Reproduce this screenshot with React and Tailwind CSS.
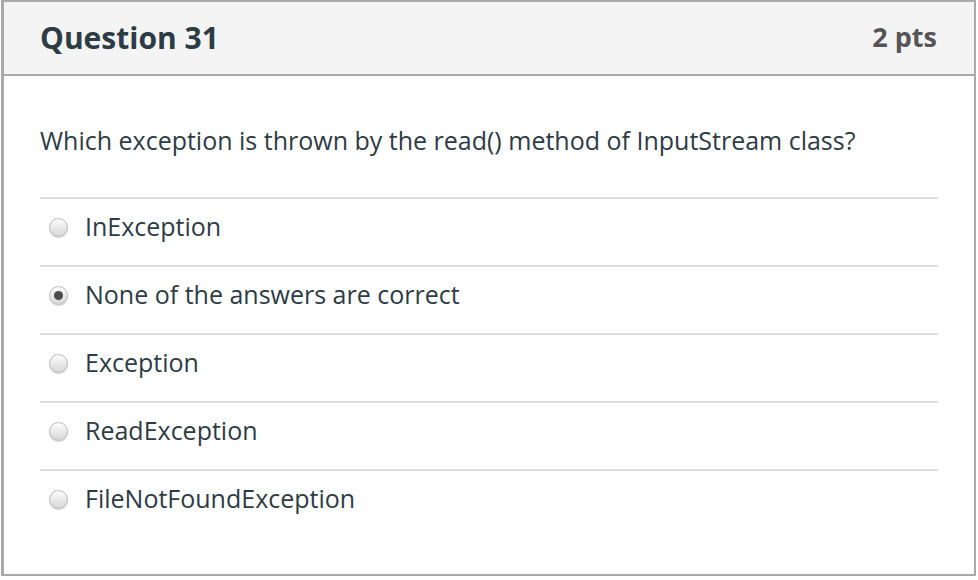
const answers = [
  { id: "a1", label: "InException" },
  { id: "a2", label: "None of the answers are correct", checked: true },
  { id: "a3", label: "Exception" },
  { id: "a4", label: "ReadException" },
  { id: "a5", label: "FileNotFoundException" },
];

function Radio({ checked }) {
  return (
    <span className="flex h-[19px] w-[19px] shrink-0 items-center justify-center rounded-full border border-[#bbbbbb] bg-gradient-to-b from-[#fdfdfd] to-[#d6d6d6] shadow-[0_1px_1px_rgba(0,0,0,0.18)]">
      {checked ? <span className="h-[9px] w-[9px] rounded-full bg-[#4a4a4a]" /> : null}
    </span>
  );
}

export default function App() {
  return (
    <div className="h-[580px] w-[978px] bg-white pl-[1px] font-['Open_Sans',sans-serif] text-[#2d3b45]">
      <div className="flex h-[576px] w-[975px] flex-col border-2 border-l-[3px] border-[#aaaaaa]">
        <div className="flex h-[74px] items-center justify-between border-b-2 border-[#aaaaaa] bg-[#f4f4f4] pl-[36px] pr-[37px]">
          <h2 className="text-[30px] font-bold leading-none">Question 31</h2>
          <span className="pb-[3px] text-[27px] font-bold leading-none text-[#555555]">2 pts</span>
        </div>

        <div className="px-[36px] pt-[47px]">
          <p className="text-[25px] leading-[34px]">
            Which exception is thrown by the read() method of InputStream class?
          </p>

          <div className="mt-[40px]">
            {answers.map((answer) => (
              <label
                key={answer.id}
                className="flex h-[68px] items-center gap-[17px] border-t-2 border-[#dddddd] pb-[10px] pl-[9px]"
              >
                <Radio checked={answer.checked} />
                <span className="text-[25px]">{answer.label}</span>
              </label>
            ))}
          </div>
        </div>
      </div>
    </div>
  );
}
